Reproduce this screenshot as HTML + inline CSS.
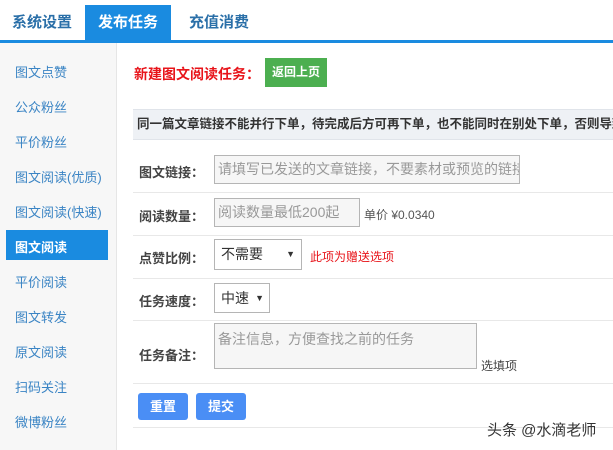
<!DOCTYPE html>
<html><head><meta charset="utf-8"><style>
*{margin:0;padding:0;box-sizing:border-box}
body{width:613px;height:450px;overflow:hidden;background:#fff;font-family:"Liberation Sans","Noto Sans CJK SC",sans-serif;font-size:13px;color:#333;position:relative}
.a{position:absolute;white-space:nowrap}
.tabs{left:0;top:0;width:613px;height:40px;border-bottom:3px solid #1a8be0;box-sizing:content-box}
.tab{position:absolute;top:5px;height:35px;line-height:35px;font-size:15px;font-weight:bold;color:#2a6fa8}
.side{left:0;top:43px;width:117px;height:407px;background:#f7f7f7;border-right:1px solid #e6e6e6}
.si{position:absolute;left:15px;font-size:13px;color:#3a84c4}
.hl{position:absolute;left:133px;width:480px;height:1px;background:#e8e8e8}
.lb{position:absolute;left:139px;font-size:13px;font-weight:bold;color:#444}
.inp{position:absolute;border:1px solid #b5b5b5;background:#f6f6f6;color:#999;font-size:14px;padding-left:3px}
.btn{position:absolute;background:#4a8ef5;color:#fff;font-weight:bold;font-size:13px;border-radius:3px;text-align:center;line-height:27px;height:27px;width:50px;top:393px}
</style></head><body>
<div class="a tabs">
<div class="tab" style="left:12px">系统设置</div>
<div class="tab" style="left:85px;width:86px;background:#1a8be0;color:#fff;text-align:center">发布任务</div>
<div class="tab" style="left:189px">充值消费</div>
</div>
<div class="a side">
<div class="si" style="top:19px">图文点赞</div>
<div class="si" style="top:54px">公众粉丝</div>
<div class="si" style="top:89px">平价粉丝</div>
<div class="si" style="top:124px">图文阅读(优质)</div>
<div class="si" style="top:159px">图文阅读(快速)</div>
<div style="position:absolute;left:6px;top:187px;width:102px;height:30px;background:#1a8be0"></div>
<div class="si" style="top:194px;color:#fff;font-weight:bold">图文阅读</div>
<div class="si" style="top:229px">平价阅读</div>
<div class="si" style="top:264px">图文转发</div>
<div class="si" style="top:299px">原文阅读</div>
<div class="si" style="top:334px">扫码关注</div>
<div class="si" style="top:369px">微博粉丝</div>
</div>
<div class="a" style="left:134px;top:64px;font-size:14px;font-weight:bold;color:#e8141a">新建图文阅读任务：</div>
<div class="a" style="left:265px;top:58px;width:62px;height:29px;background:#4caf50;color:#fff;font-size:12px;font-weight:bold;line-height:29px;text-align:center">返回上页</div>
<div class="a" style="left:133px;top:109px;width:480px;height:31px;background:#eef1f5;border-top:1px solid #e0e4ea;border-bottom:1px solid #e0e4ea;line-height:29px;padding-left:4px;font-size:12.5px;font-weight:bold;color:#333;overflow:hidden">同一篇文章链接不能并行下单，待完成后方可再下单，也不能同时在别处下单，否则导致结果</div>
<div class="lb" style="top:162px">图文链接：</div>
<div class="inp" style="left:214px;top:155px;width:306px;height:29px;line-height:27px;overflow:hidden;white-space:nowrap">请填写已发送的文章链接，不要素材或预览的链接</div>
<div class="hl" style="top:192px"></div>
<div class="lb" style="top:206px">阅读数量：</div>
<div class="inp" style="left:214px;top:198px;width:146px;height:29px;line-height:27px">阅读数量最低200起</div>
<div class="a" style="left:364px;top:206px;font-size:12px;color:#555">单价 ¥0.0340</div>
<div class="hl" style="top:235px"></div>
<div class="lb" style="top:248px">点赞比例：</div>
<div class="inp" style="left:214px;top:239px;width:88px;height:31px;line-height:29px;background:#fff;color:#333;padding-left:6px">不需要<span style="position:absolute;right:6px;font-size:9px">▼</span></div>
<div class="a" style="left:310px;top:248px;font-size:12px;color:#e8141a">此项为赠送选项</div>
<div class="hl" style="top:278px"></div>
<div class="lb" style="top:291px">任务速度：</div>
<div class="inp" style="left:214px;top:283px;width:56px;height:30px;line-height:28px;background:#fff;color:#333;padding-left:6px">中速<span style="position:absolute;right:5px;font-size:9px">▼</span></div>
<div class="hl" style="top:320px"></div>
<div class="lb" style="top:345px">任务备注：</div>
<div class="inp" style="left:214px;top:323px;width:263px;height:46px;line-height:30px;padding-left:3px">备注信息，方便查找之前的任务</div>
<div class="a" style="left:481px;top:357px;font-size:12px;color:#444">选填项</div>
<div class="hl" style="top:383px"></div>
<div class="btn" style="left:138px">重置</div>
<div class="btn" style="left:196px">提交</div>
<div class="hl" style="top:427px"></div>
<div class="a" style="left:487px;top:419px;font-size:15px;color:#333">头条 @水滴老师</div>
</body></html>
